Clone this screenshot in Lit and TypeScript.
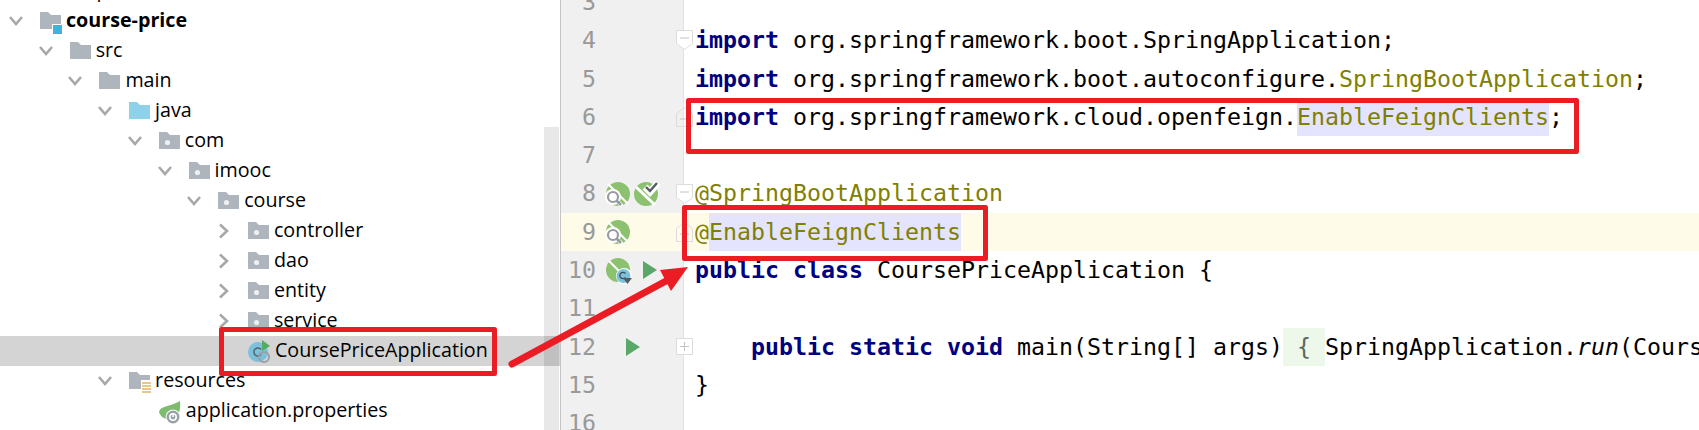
import { LitElement, html, css, svg } from "lit";
import { customElement } from "lit/decorators.js";

const chevDown = html`<svg class="chev" width="40" height="20" viewBox="0 0 40 20"><path d="M10 6l6 7 6-7" fill="none" stroke="#a8a8a8" stroke-width="2.600"/></svg>`;
const chevRight = html`<svg class="chev" width="40" height="20" viewBox="0 0 40 20"><path d="M12 3.500l7 6.500-7 6.500" fill="none" stroke="#a8a8a8" stroke-width="2.600"/></svg>`;
const chevNone = html`<span class="chev-space"></span>`;

const folderPath = "M0 2h8l3 3h10v14H0z";
const folder = (fill: string, extra: unknown = null) => html`<svg class="ico" width="21" height="22" viewBox="0 0 21 22"><path d=${folderPath} fill=${fill}/>${extra}</svg>`;
const plainFolder = folder("#afb5bc");
const srcFolder = folder("#8fd0ea");
const pkgFolder = folder("#afb5bc", svg`<circle cx="8.500" cy="12.500" r="2.600" fill="#eef0f2"/>`);
const moduleFolder = folder("#afb5bc", svg`<rect x="12" y="14" width="11" height="11" fill="#fff"/><rect x="13" y="15" width="9" height="9" fill="#3db4dc"/>`);
const resFolder = folder("#afb5bc", svg`<rect x="12" y="10" width="11" height="14" fill="#fff"/><path d="M13 13h9M13 16h9M13 19h9M13 22h9" stroke="#e3b55c" stroke-width="1.700"/>`);
const classIcon = html`<svg class="ico" width="22" height="24" viewBox="0 0 22 24">
  <circle cx="10" cy="13" r="10" fill="#7cc0dc"/>
  <path d="M13 10.500a4 4 0 1 0 0 5" fill="none" stroke="#55616b" stroke-width="1.400"/>
  <path d="M14 1l8 6-8 5z" fill="#4fae62"/>
  <circle cx="16" cy="18" r="5" fill="none" stroke="#9a9fa5" stroke-width="2"/>
</svg>`;
const propsIcon = html`<svg class="ico" width="22" height="24" viewBox="0 0 22 24">
  <path d="M0 13C1 7 10 8 21 2c1 9-1 15-8 18-6 1-11-1-13-7z" fill="#7dbb6e"/>
  <circle cx="14" cy="18" r="7.500" fill="#fff"/>
  <circle cx="14" cy="18" r="6.500" fill="#9aa1a8"/>
  <circle cx="14" cy="18" r="3.200" fill="none" stroke="#fff" stroke-width="1.500"/>
  <path d="M14 14v4" stroke="#fff" stroke-width="1.500"/>
</svg>`;

const beanSearch = html`<svg class="gi" width="26" height="26" viewBox="0 -1 26 26">
  <circle cx="12" cy="12" r="12" fill="#8cc26f"/>
  <path d="M2 2l20 20" stroke="#fff" stroke-width="2"/>
  <circle cx="7" cy="15" r="8" fill="#fff"/>
  <path d="M13 21l3 3" stroke="#fff" stroke-width="4"/>
  <circle cx="7" cy="15" r="5" fill="#fff" stroke="#979ca2" stroke-width="2.200"/>
  <path d="M10.500 18.500l4.500 4.500" stroke="#979ca2" stroke-width="2.600"/>
</svg>`;
const beanCheck = html`<svg class="gi" width="26" height="26" viewBox="0 -1 26 26">
  <circle cx="12" cy="12" r="12" fill="#8cc26f"/>
  <path d="M2 5l19 18" stroke="#fff" stroke-width="3"/>
  <path d="M11 5l5 5 8-9" fill="none" stroke="#fff" stroke-width="7"/>
  <path d="M12 5l4 4 7-8" fill="none" stroke="#555b61" stroke-width="2.400"/>
</svg>`;
const beanClass = html`<svg class="gi" width="26" height="26" viewBox="0 -1 26 26">
  <circle cx="12" cy="12" r="12" fill="#8cc26f"/>
  <path d="M3 3l18 18" stroke="#fff" stroke-width="2"/>
  <circle cx="18" cy="18" r="8" fill="#fff"/>
  <circle cx="17.500" cy="18" r="7" fill="#7cc0dc"/>
  <path d="M19.500 15.500a3.200 3.200 0 1 0 0 4" fill="none" stroke="#3f4a52" stroke-width="1.300"/>
  <path d="M17 20h9l-4.500 6z" fill="#555b61"/>
</svg>`;
const run = (cls: string) => html`<svg class="run ${cls}" width="14" height="18" viewBox="0 0 14 18"><path d="M0 0l14 9L0 18z" fill="#59a869"/></svg>`;

const foldDown = html`<svg class="fold" width="17" height="20" viewBox="0 0 17 20"><path d="M.5.500h16v13l-8 6-8-6z" fill="#fff" stroke="#dcdcdc"/><path d="M4 8h9" stroke="#c4c4c4"/></svg>`;
const foldUp = html`<svg class="fold" width="17" height="20" viewBox="0 0 17 20"><path d="M.5 19.500h16v-13l-8-6-8 6z" fill="none" stroke="#dcdcdc"/><path d="M4 12h9" stroke="#c4c4c4"/></svg>`;
const foldPlus = html`<svg class="fold" width="17" height="17" viewBox="0 0 17 17"><path d="M.5.500h16v16H.5z" fill="#fff" stroke="#dcdcdc"/><path d="M4 8.500h9M8.500 4v9" stroke="#c4c4c4"/></svg>`;

interface TreeRow { level: number; chev: unknown; icon: unknown; text: string; cls?: string; }
const rows: TreeRow[] = [
  { level: 1.900, chev: chevNone, icon: null, text: "p" },
  { level: 0, chev: chevDown, icon: moduleFolder, text: "course-price", cls: "bold" },
  { level: 1, chev: chevDown, icon: plainFolder, text: "src" },
  { level: 2, chev: chevDown, icon: plainFolder, text: "main" },
  { level: 3, chev: chevDown, icon: srcFolder, text: "java" },
  { level: 4, chev: chevDown, icon: pkgFolder, text: "com" },
  { level: 5, chev: chevDown, icon: pkgFolder, text: "imooc" },
  { level: 6, chev: chevDown, icon: pkgFolder, text: "course" },
  { level: 7, chev: chevRight, icon: pkgFolder, text: "controller" },
  { level: 7, chev: chevRight, icon: pkgFolder, text: "dao" },
  { level: 7, chev: chevRight, icon: pkgFolder, text: "entity" },
  { level: 7, chev: chevRight, icon: pkgFolder, text: "service" },
  { level: 7, chev: chevNone, icon: classIcon, text: "CoursePriceApplication", cls: "selected" },
  { level: 3, chev: chevDown, icon: resFolder, text: "resources" },
  { level: 4, chev: chevNone, icon: propsIcon, text: "application.properties" },
];

interface CodeLine { n: string; gutter?: unknown; fold?: unknown; code?: unknown; cls?: string; }
const kw = (t: string) => html`<span class="kw">${t}</span>`;
const ann = (t: string) => html`<span class="ann">${t}</span>`;
const lines: CodeLine[] = [
  { n: "3" },
  { n: "4", fold: foldDown, code: html`${kw("import")} org.springframework.boot.SpringApplication;` },
  { n: "5", code: html`${kw("import")} org.springframework.boot.autoconfigure.${ann("SpringBootApplication")};` },
  { n: "6", fold: foldUp, code: html`${kw("import")} org.springframework.cloud.openfeign.<span class="ann hl">EnableFeignClients</span>;` },
  { n: "7" },
  { n: "8", gutter: html`${beanSearch}${beanCheck}`, fold: foldDown, code: ann("@SpringBootApplication") },
  { n: "9", gutter: beanSearch, fold: foldUp, cls: "current", code: html`${ann("@")}<span class="ann hl">EnableFeignClients</span>` },
  { n: "10", gutter: html`${beanClass}${run("r10")}`, code: html`${kw("public class")} CoursePriceApplication {` },
  { n: "11" },
  { n: "12", gutter: run("r12"), fold: foldPlus, code: html`    ${kw("public static void")} main(String[] args)<span class="brace"> { </span>SpringApplication.<i>run</i>(CoursePriceApplication.class, args); }` },
  { n: "15", code: "}" },
  { n: "16" },
];

@customElement("app-root")
export class AppRoot extends LitElement {
  static styles = css`
    :host { display: block; position: relative; width: 1699px; height: 430px; overflow: hidden; background: #fff; }
    .layout { display: grid; grid-template-columns: 560px 1fr; height: 430px; overflow: hidden; }
    .tree { margin-top: -24px; font-family: "Open Sans", "Noto Sans", sans-serif; font-size: 19.7px; color: #000; }
    .row { display: flex; align-items: center; height: 30px; white-space: nowrap; }
    .row.selected { background: #d4d4d4; }
    .row.bold { font-weight: 700; }
    .label { margin-bottom: 3px; }
    .chev { flex: none; }
    .chev-space { flex: none; width: 40px; }
    .indent { flex: none; }
    .ico { flex: none; margin-right: 5px; overflow: visible; }
    .thumb { position: absolute; left: 544px; top: 127px; bottom: 0; width: 15px; background: rgba(0, 0, 0, 0.09); }
    .editor { margin-top: -17px; border-left: 1px solid #c4c4c4; min-width: 0; }
    .line { display: flex; height: 38.3px; font-family: "DejaVu Sans Mono", "Liberation Mono", monospace; font-size: 23.25px; line-height: 38.3px; }
    .gutter { flex: none; width: 122px; background: #f0f0f0; display: flex; align-items: center; color: #999; border-right: 1px solid #e2e2e2; }
    .num { flex: none; width: 35px; text-align: right; }
    .icons { flex: none; width: 70px; margin-left: 10px; display: flex; align-items: center; gap: 2px; }
    .gi { flex: none; overflow: visible; }
    .run { flex: none; }
    .run.r10 { margin-left: 9px; }
    .run.r12 { margin-left: 20px; }
    .fold { flex: none; position: relative; z-index: 1; }
    .gutter { position: relative; z-index: 1; }
    .code { flex: 1; min-width: 0; padding-left: 11px; white-space: pre; overflow: hidden; color: #000; }
    .line.current, .line.current .gutter { background: #fefbe8; }
    .kw { color: #000080; font-weight: 700; }
    .ann { color: #808000; }
    .hl { background: #e4e4ff; display: inline-block; height: 38.3px; }
    .brace { background: #eef8ea; color: #5a6a5a; display: inline-block; height: 38.3px; }
    .overlay { position: absolute; inset: 0; pointer-events: none; z-index: 2; }
  `;

  render() {
    return html`
      <div class="layout">
        <div class="tree">
          ${rows.map(
            (r) => html`<div class="row ${r.cls ?? ""}">
              <span class="indent" style="width:${r.level * 29.7}px"></span>
              ${r.chev}${r.icon}<span class="label">${r.text}</span>
            </div>`
          )}
        </div>
        <div class="editor">
          ${lines.map(
            (l) => html`<div class="line ${l.cls ?? ""}">
              <div class="gutter">
                <span class="num">${l.n}</span>
                <span class="icons">${l.gutter ?? ""}</span>
                ${l.fold ?? ""}
              </div>
              <div class="code">${l.code ?? ""}</div>
            </div>`
          )}
        </div>
      </div>
      <div class="thumb"></div>
      <svg class="overlay" width="1699" height="430" viewBox="0 0 1699 430">
        <g fill="none" stroke="#ec1c24" stroke-width="5" stroke-linejoin="round">
          <rect x="688.500" y="100.500" width="888" height="51"/>
          <rect x="684.500" y="207.500" width="301" height="51"/>
          <rect x="221.500" y="329.500" width="273" height="44"/>
        </g>
        <path d="M512 364L666 281" stroke="#ec1c24" stroke-width="7" stroke-linecap="round"/>
        <path d="M688 267L660 270L671 291z" fill="#ec1c24"/>
      </svg>
    `;
  }
}
